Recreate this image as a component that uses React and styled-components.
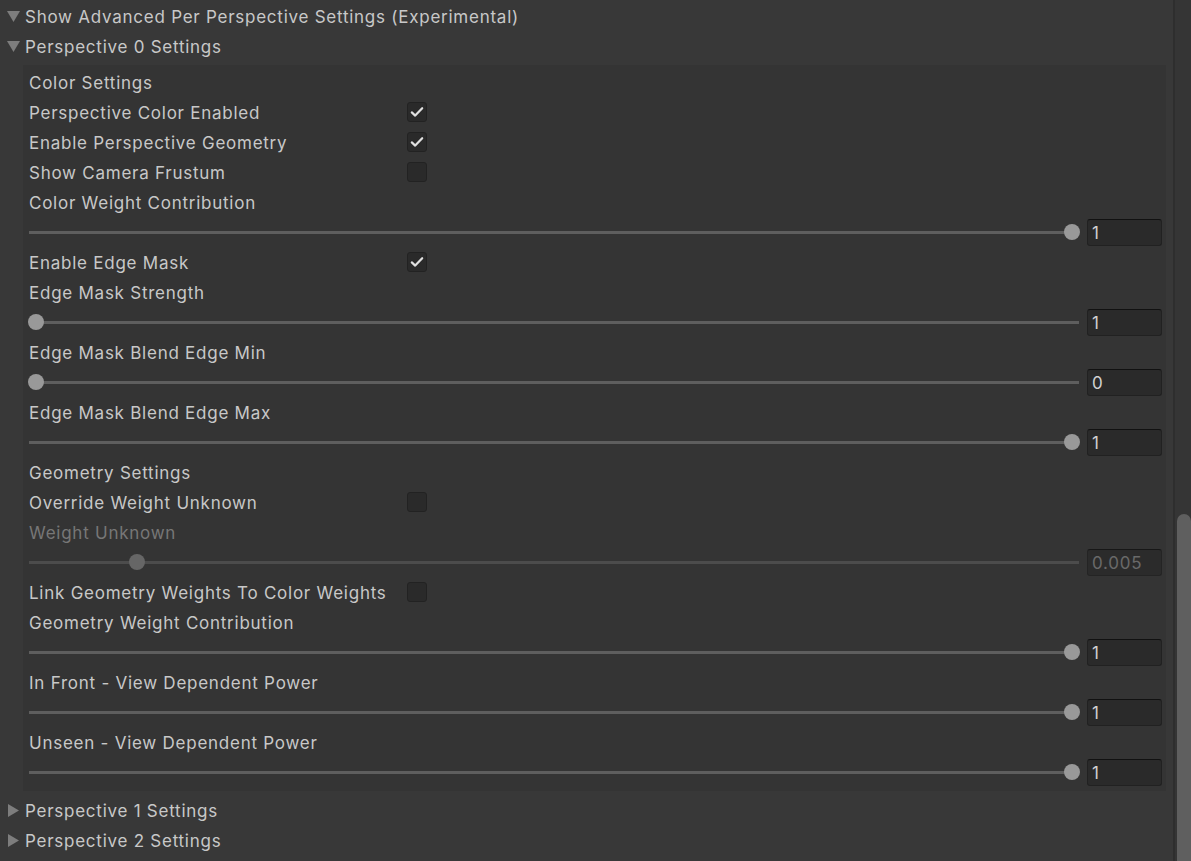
import React from "react";
import styled, { createGlobalStyle } from "styled-components";

const GlobalStyle = createGlobalStyle`
  html, body {
    margin: 0;
    padding: 0;
    background: #383838;
    overflow: hidden;
  }
  body {
    font-family: Inter, "Noto Sans", sans-serif;
    font-size: 17px;
    letter-spacing: 0.75px;
    color: #c8c8c8;
    -webkit-font-smoothing: antialiased;
  }
`;

const Window = styled.div`
  display: flex;
  width: 1191px;
  height: 861px;
  overflow: hidden;
`;

const Content = styled.div`
  flex: 1;
  display: flex;
  flex-direction: column;
  padding-top: 1px;
`;

const Scrollbar = styled.div`
  width: 16px;
  border-left: 2px solid #2e2e2e;
  background: #353535;
  display: flex;
  flex-direction: column;
  padding-top: 514px;
  align-items: flex-end;
`;

const Thumb = styled.div`
  width: 14px;
  flex: 1;
  background: #5f5f5f;
  border-radius: 7px 7px 0 0;
`;

const FoldoutRow = styled.div`
  height: 30px;
  display: flex;
  align-items: center;
  gap: 5px;
  padding-left: 7px;
  white-space: nowrap;
  span.t { padding-top: 2px; }
`;

const Arrow = styled.span`
  width: 13px;
  height: 13px;
  display: flex;
  align-items: center;
  justify-content: center;
  svg { display: block; }
`;

const Panel = styled.div`
  margin: 4px 7px 4px 23px;
  padding: 2px 4px 4px 6px;
  background: #343434;
  display: flex;
  flex-direction: column;
`;

const Row = styled.div`
  height: 30px;
  display: flex;
  align-items: center;
  white-space: nowrap;
  color: ${(p) => (p.$disabled ? "#777777" : "#c8c8c8")};
`;

const Label = styled.span`
  width: 378px;
  flex-shrink: 0;
  padding-top: 2px;
`;

const Caption = styled.span`
  padding-top: 2px;
`;

const Checkbox = styled.span`
  width: 18px;
  height: 18px;
  border: 1px solid #222222;
  border-radius: 3px;
  background: #2a2a2a;
  display: flex;
  align-items: center;
  justify-content: center;
`;

const SliderTrack = styled.div`
  flex: 1;
  height: 16px;
  margin-left: -1px;
  margin-right: 7px;
  position: relative;
  display: flex;
  align-items: center;
`;

const TrackLine = styled.div`
  flex: 1;
  height: 3px;
  margin: 0 1px;
  background: ${(p) => (p.$disabled ? "#4c4c4c" : "#5e5e5e")};
`;

const Knob = styled.div`
  position: absolute;
  top: 0;
  width: 16px;
  height: 16px;
  border-radius: 50%;
  background: ${(p) => (p.$disabled ? "#666666" : "#999999")};
`;

const Field = styled.div`
  width: 73px;
  height: 25px;
  box-sizing: content-box;
  border: 1px solid #212121;
  border-top-color: #111111;
  border-radius: 3px;
  background: #2a2a2a;
  display: flex;
  align-items: center;
  font-size: 17px;
  color: ${(p) => (p.$disabled ? "#777777" : "#d2d2d2")};
  opacity: ${(p) => (p.$disabled ? 0.8 : 1)};
  span { padding: 2px 0 0 4px; }
`;

const Check = () => (
  <svg width="14" height="12" viewBox="0 0 14 12">
    <path d="M1.8 6.4 L5.2 9.6 L12.2 2.2" fill="none" stroke="#e0e0e0" strokeWidth="2.2" strokeLinecap="round" strokeLinejoin="round" />
  </svg>
);

const Triangle = ({ open }) => (
  <Arrow>
    {open ? (
      <svg width="13" height="11" viewBox="0 0 13 11"><path d="M0 0 H13 L6.5 11 Z" fill="#7d7d7d" /></svg>
    ) : (
      <svg width="11" height="13" viewBox="0 0 11 13"><path d="M0 0 V13 L11 6.5 Z" fill="#7d7d7d" /></svg>
    )}
  </Arrow>
);

const Foldout = ({ open, children }) => (
  <FoldoutRow>
    <Triangle open={open} />
    <span className="t">{children}</span>
  </FoldoutRow>
);

const Toggle = ({ label, checked }) => (
  <Row>
    <Label>{label}</Label>
    <Checkbox>{checked && <Check />}</Checkbox>
  </Row>
);

const Slider = ({ pos, value, disabled }) => (
  <Row>
    <SliderTrack>
      <TrackLine $disabled={disabled} />
      <Knob $disabled={disabled} style={{ left: `calc(${pos} * (100% - 16px))` }} />
    </SliderTrack>
    <Field $disabled={disabled}><span>{value}</span></Field>
  </Row>
);

const Text = ({ children, disabled }) => (
  <Row $disabled={disabled}>
    <Caption>{children}</Caption>
  </Row>
);

const items = [
  { type: "text", text: "Color Settings" },
  { type: "toggle", text: "Perspective Color Enabled", checked: true },
  { type: "toggle", text: "Enable Perspective Geometry", checked: true },
  { type: "toggle", text: "Show Camera Frustum", checked: false },
  { type: "text", text: "Color Weight Contribution" },
  { type: "slider", pos: 1, value: "1" },
  { type: "toggle", text: "Enable Edge Mask", checked: true },
  { type: "text", text: "Edge Mask Strength" },
  { type: "slider", pos: 0, value: "1" },
  { type: "text", text: "Edge Mask Blend Edge Min" },
  { type: "slider", pos: 0, value: "0" },
  { type: "text", text: "Edge Mask Blend Edge Max" },
  { type: "slider", pos: 1, value: "1" },
  { type: "text", text: "Geometry Settings" },
  { type: "toggle", text: "Override Weight Unknown", checked: false },
  { type: "text", text: "Weight Unknown", disabled: true },
  { type: "slider", pos: 0.0975, value: "0.005", disabled: true },
  { type: "toggle", text: "Link Geometry Weights To Color Weights", checked: false },
  { type: "text", text: "Geometry Weight Contribution" },
  { type: "slider", pos: 1, value: "1" },
  { type: "text", text: "In Front - View Dependent Power" },
  { type: "slider", pos: 1, value: "1" },
  { type: "text", text: "Unseen - View Dependent Power" },
  { type: "slider", pos: 1, value: "1" },
];

export default function App() {
  return (
    <>
      <GlobalStyle />
      <Window>
        <Content>
          <Foldout open>Show Advanced Per Perspective Settings (Experimental)</Foldout>
          <Foldout open>Perspective 0 Settings</Foldout>
          <Panel>
            {items.map((it, i) => {
              if (it.type === "toggle") return <Toggle key={i} label={it.text} checked={it.checked} />;
              if (it.type === "slider") return <Slider key={i} pos={it.pos} value={it.value} disabled={it.disabled} />;
              return <Text key={i} disabled={it.disabled}>{it.text}</Text>;
            })}
          </Panel>
          <Foldout>Perspective 1 Settings</Foldout>
          <Foldout>Perspective 2 Settings</Foldout>
        </Content>
        <Scrollbar>
          <Thumb />
        </Scrollbar>
      </Window>
    </>
  );
}
